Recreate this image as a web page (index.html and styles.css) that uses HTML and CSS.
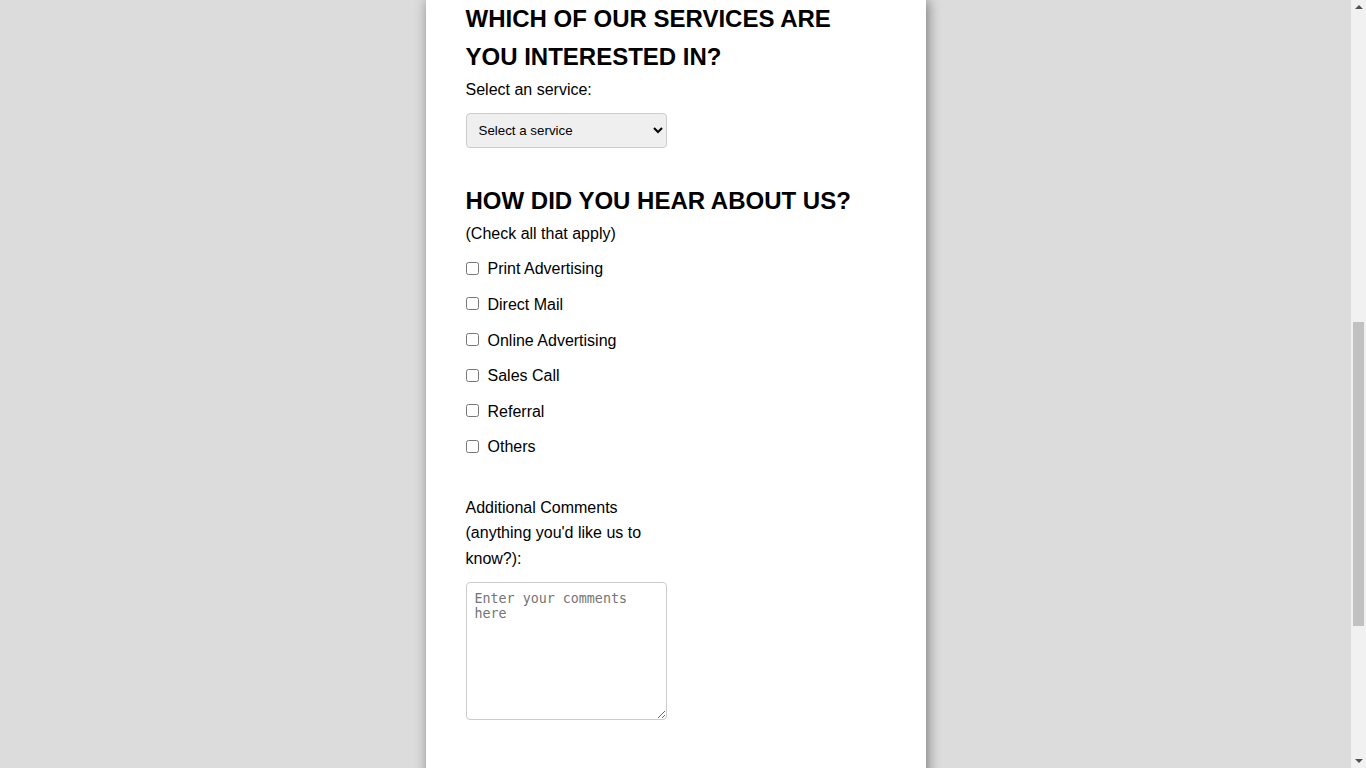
FILE: index.html
```html
<!DOCTYPE html>
<html lang="en">
<head>
    <meta charset="UTF-8">
    <meta name="viewport" content="width=device-width, initial-scale=1.0">
    <title>Contact Form</title>
    <link rel="stylesheet" href="styles.css">
</head>
<body>
    <div id="page">
        <form id="contact-form">
            <div class="section">
                <h2>Which of our services are you interested in?</h2>
                <label for="service">Select an service:</label>
                <select id="service" name="service">
                    <option value="">Select a service</option>
                    <option value="design">Design</option>
                    <option value="development">Development</option>
                    <option value="marketing">Marketing</option>
                </select>
            </div>
            <div class="section">
                <h2>How did you hear about us?</h2>
                <p class="hint">(Check all that apply)</p>
                <label class="check"><input type="checkbox" name="source" value="print"> Print Advertising</label>
                <label class="check"><input type="checkbox" name="source" value="mail"> Direct Mail</label>
                <label class="check"><input type="checkbox" name="source" value="online"> Online Advertising</label>
                <label class="check"><input type="checkbox" name="source" value="call"> Sales Call</label>
                <label class="check"><input type="checkbox" name="source" value="referral"> Referral</label>
                <label class="check"><input type="checkbox" name="source" value="others"> Others</label>
            </div>
            <div class="section">
                <label for="comments" class="comments-label">Additional Comments (anything you'd like us to know?):</label>
                <textarea id="comments" name="comments" placeholder="Enter your comments here"></textarea>
            </div>
        </form>
    </div>
    <!-- page scrollbar -->
    <div class="scrollbar">
        <div class="scroll-arrow"><span class="tri up"></span></div>
        <div class="scroll-track"><div class="scroll-thumb"></div></div>
        <div class="scroll-arrow"><span class="tri down"></span></div>
    </div>
</body>
</html>
```

FILE: styles.css
```css
body {
    margin: 0;
    padding-right: 15px;
    background: #dcdcdc;
    font-family: 'Liberation Sans', Arial, sans-serif;
    font-size: 16px;
    line-height: 1.6;
    color: #000;
}
#page {
    width: 500px;
    margin: 0 auto;
    background: #fff;
    padding: 0 40px 120px 40px;
    box-sizing: border-box;
    box-shadow: 2px 0 12px rgba(0, 0, 0, 0.45);
}
#contact-form {
    display: flex;
    flex-direction: column;
}
.section {
    display: flex;
    flex-direction: column;
    align-items: flex-start;
}
.section + .section {
    margin-top: 34.5px;
}
h2 {
    font-size: 24px;
    text-transform: uppercase;
    margin: 0;
    line-height: 1.6;
}
.hint {
    margin: 0;
}
#service {
    margin-top: 10.6px;
    width: 201px;
    height: 35px;
    box-sizing: border-box;
    padding: 0 8px;
    border: 1px solid #ccc;
    border-radius: 4px;
    background: #efefef;
    font-family: 'Liberation Sans', Arial, sans-serif;
    font-size: 13.33px;
    color: #000;
}
.check {
    display: flex;
    align-items: center;
    gap: 9px;
    margin-top: 10px;
}
.check input {
    margin: 0;
    width: 13px;
    height: 13px;
    position: relative;
    top: -1px;
}
.comments-label {
    width: 201px;
}
#comments {
    margin-top: 10.6px;
    width: 201px;
    height: 138px;
    box-sizing: border-box;
    padding: 8px;
    border: 1px solid #ccc;
    border-radius: 4px;
    font-family: 'DejaVu Sans Mono', monospace;
    font-size: 13.33px;
}
.scrollbar {
    position: fixed;
    top: 0;
    right: 0;
    width: 15px;
    height: 100vh;
    background: #f1f1f1;
    display: flex;
    flex-direction: column;
}
.scroll-arrow {
    height: 15px;
    display: flex;
    align-items: center;
    justify-content: center;
}
.tri {
    width: 0;
    height: 0;
    border-left: 4px solid transparent;
    border-right: 4px solid transparent;
}
.tri.up {
    border-bottom: 4px solid #505050;
    margin-top: -1px;
}
.tri.down {
    border-top: 4px solid #505050;
    margin-top: 1px;
}
.scroll-track {
    flex: 1;
    padding: 0 2px;
}
.scroll-thumb {
    margin-top: 307px;
    height: 304px;
    background: #c1c1c1;
}
```
